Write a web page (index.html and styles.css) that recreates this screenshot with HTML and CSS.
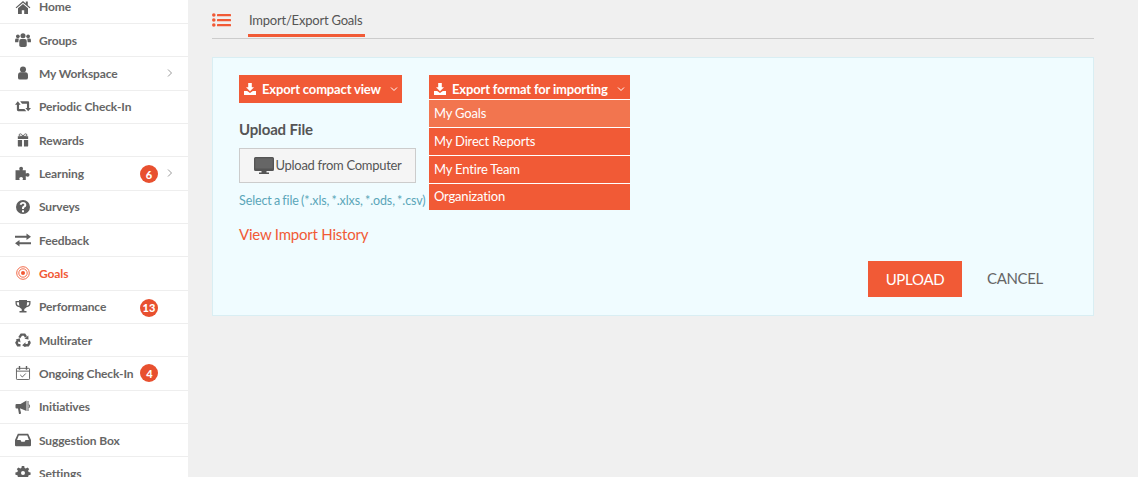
FILE: index.html
```html
<!DOCTYPE html>
<html lang="en">
<head>
<meta charset="utf-8">
<title>Import/Export Goals</title>
<link rel="stylesheet" href="styles.css">
</head>
<body>
<svg class="sprites" aria-hidden="true">
  <symbol id="download" viewBox="0 0 12 12"><path d="M4.2 0h3.6v4.2H10L6 8.200 2 4.200h2.200zM0 8h3.200L6 10l2.800-2H12v4H0z"/></symbol>
  <symbol id="chev" viewBox="0 0 8 8"><path class="line" d="M1 2.500 4 5.500 7 2.500"/></symbol>
</svg>
<div class="app">
  <nav class="sidebar">
    <ul class="nav">
      <li class="item"><svg class="ico" viewBox="0 0 16 14"><path d="M8 1 0.600 7.400l.8.900L8 2.800l6.600 5.500.8-.9L12.800 5.200V1.500h-2v2L8 1zM3 8.300V14h3.800v-3.800h2.400V14H13V8.300L8 4.100z"/></svg><span class="label">Home</span></li>
      <li class="item"><svg class="ico" viewBox="0 0 17 15"><circle cx="3" cy="3.500" r="2"/><circle cx="14" cy="3.500" r="2"/><circle cx="8.500" cy="3" r="2.700"/><path d="M0 10V7.500Q0 6 1.500 6H4L3.500 10zM17 10V7.500Q17 6 15.500 6H13l.5 4zM4.500 13.500V8.500Q4.500 6.500 6.500 6.500h4q2 0 2 2v5q0 1.500-2 1.500h-4q-2 0-2-1.500z"/></svg><span class="label">Groups</span></li>
      <li class="item"><svg class="ico" viewBox="0 0 17 14"><circle cx="8.500" cy="3.200" r="3.200"/><path d="M3.200 11V9.500Q3.200 6.500 6 6.300h5Q13.800 6.500 13.800 9.500V12Q13.800 14 11.800 14H5.200Q3.200 14 3.200 12z"/></svg><span class="label">My Workspace</span><svg class="chevron" viewBox="0 0 8 8"><path class="line" d="M2 .5 5.500 4 2 7.500"/></svg></li>
      <li class="item"><svg class="ico" viewBox="0 0 17 12"><path d="M3 0 6 3.500H4.300V8H10l2 2.500H3.500Q2 10.500 2 9V3.500H0zM5.500 0H14Q15 0 15 1.500V7h2l-3 3.500L11 7h1.700V2.500H7.500z"/></svg><span class="label">Periodic Check-In</span></li>
      <li class="item"><svg class="ico" viewBox="0 0 17 14"><path d="M3 3h11v3H3zM3 7h4.500v7H4Q3 14 3 13zM9.500 7H14v6q0 1-1 1H9.500zM7.500 3h2v3h-2z"/><path class="line" d="M8.500 3C7.500 1 6.500 .5 5.500.5 4 .5 4 3 5.500 3zM8.500 3C9.500 1 10.500 .5 11.500.5 13 .5 13 3 11.500 3z"/></svg><span class="label">Rewards</span></li>
      <li class="item"><svg class="ico" viewBox="0 0 16 15"><path d="M0 4.500h4.500Q4 3.500 4 2.500 4 .8 6 .8T8 2.500Q8 3.500 7.500 4.500H11V8q1-.6 2-.6 2 0 2 2t-2 2q-1 0-2-.6V15H7.500q.5-1 .5-1.500 0-1.700-2-1.700T4 13.500Q4 14 4.500 15H0z"/></svg><span class="label">Learning</span><span class="badge badge-far">6</span><svg class="chevron" viewBox="0 0 8 8"><path class="line" d="M2 .5 5.500 4 2 7.500"/></svg></li>
      <li class="item"><svg class="ico" viewBox="0 0 14 14"><path fill-rule="evenodd" d="M7 0a7 7 0 1 1 0 14A7 7 0 0 1 7 0zM6 10.300v1.900h2v-1.900zM7 2C5.200 2 4 3 3.700 4.500l1.800.5C5.700 4.300 6.200 3.800 7 3.800c.8 0 1.300.4 1.300 1 0 .6-.5.900-1.100 1.300C6.500 6.600 6 7.100 6 8.200v.8h2v-.5c0-.5.3-.8.900-1.200C9.700 6.800 10.300 6.100 10.300 4.900 10.300 3.200 8.900 2 7 2z"/></svg><span class="label">Surveys</span></li>
      <li class="item"><svg class="ico" viewBox="0 0 16 13"><path d="M11.500 0 16 3.200 11.500 6.400V4.200H0V2.200h11.500zM4.500 6.600V8.800H16v2H4.500V13L0 9.800z"/></svg><span class="label">Feedback</span></li>
      <li class="item active"><svg class="ico" viewBox="0 0 14 14"><circle class="ring" cx="7" cy="7" r="6.300"/><circle class="ring" cx="7" cy="7" r="4.200"/><circle cx="7" cy="7" r="2"/></svg><span class="label">Goals</span></li>
      <li class="item"><svg class="ico" viewBox="0 0 15 14"><path d="M3.500 0h8v1h3.500v2.500Q15 6.500 11 7.300 10 8.500 8.800 8.900V11H11v1.500H4V11h2.200V8.900Q5 8.500 4 7.300 0 6.500 0 3.500V1h3.500zM1.300 2.300v1.200q0 1.800 2.500 2.500-.3-1.500-.3-3.700zM13.700 2.300h-2.200q0 2.200-.3 3.700 2.500-.7 2.500-2.500z"/></svg><span class="label">Performance</span><span class="badge badge-far">13</span></li>
      <li class="item"><svg class="ico" viewBox="0 0 15 14"><path class="thick" d="M3.800 4.600 5.800 1.600H9L10.500 4"/><path d="M12.800 2.400 13 6.500 9 5.800z"/><path class="thick" d="M13.300 8 14 9.800 12.600 12.200H9.500"/><path d="M10 9.300V14.500L6.700 12.200z"/><path class="thick" d="M5 12.200H2.400L1 9.800 2.500 7.200"/><path d="M.2 6.500 4.300 5.300 5 9.500z"/></svg><span class="label">Multirater</span></li>
      <li class="item"><svg class="ico" viewBox="0 0 15 15"><rect class="line" x=".5" y="2.500" width="14" height="12" rx=".8"/><path class="line" d="M.5 5.500h14"/><path d="M3 0h1.500v4H3zM10.500 0H12v4h-1.500z"/><path class="line" d="M4.500 9.500 6.800 11.800 10.500 8"/></svg><span class="label">Ongoing Check-In</span><span class="badge badge-near">4</span></li>
      <li class="item"><svg class="ico" viewBox="0 0 15 14"><path d="M0 5Q0 4 1 4h4l6-3.500V11L5 8.500H4.500L5.500 13l-.5 1H3.500L2.500 8.500H1Q0 8.500 0 7.500z"/><path class="line" d="M12.500 1v10M13.500 4.500q1.200 1.700 0 3.400"/></svg><span class="label">Initiatives</span></li>
      <li class="item"><svg class="ico" viewBox="0 0 14 11"><path fill-rule="evenodd" d="M2.500 0h9L14 5.500V10q0 1-1 1H1q-1 0-1-1V5.500zM3.300 1.500 1.800 5.500h3l.8 1.500h2.800l.8-1.500h3l-1.500-4z"/></svg><span class="label">Suggestion Box</span></li>
      <li class="item"><svg class="ico" viewBox="0 0 14 14"><path fill-rule="evenodd" d="M5.800 0h2.400l.4 2 1.200.5 1.700-1.100 1.700 1.700-1.100 1.700.5 1.200 2 .4v2.400l-2 .4-.5 1.200 1.100 1.700-1.700 1.700-1.700-1.100-1.200.5-.4 2H5.800l-.4-2-1.200-.5-1.700 1.100L.8 12.100l1.100-1.700-.5-1.200-2-.4V6.400l2-.4.500-1.200L.8 3.100 2.500 1.400l1.700 1.100 1.200-.5zM7 5a2 2 0 1 0 0 4 2 2 0 0 0 0-4z"/></svg><span class="label">Settings</span></li>
    </ul>
  </nav>
  <main class="main">
    <header class="tabs">
      <svg class="list-icon" viewBox="0 0 19 14"><circle cx="1.800" cy="2" r="1.800"/><circle cx="1.800" cy="7" r="1.800"/><circle cx="1.800" cy="12" r="1.800"/><rect x="5" y=".9" width="14" height="2.400" rx=".6"/><rect x="5" y="5.900" width="14" height="2.400" rx=".6"/><rect x="5" y="10.900" width="14" height="2.400" rx=".6"/></svg>
      <div class="tab">Import/Export Goals</div>
    </header>
    <section class="panel">
      <div class="columns">
        <div class="col-upload">
          <button class="btn-export"><svg class="dl"><use href="#download"/></svg><span>Export compact view</span><svg class="caret"><use href="#chev"/></svg></button>
          <h2 class="upload-title">Upload File</h2>
          <button class="btn-computer"><svg class="monitor" viewBox="0 0 20 17"><path d="M1.500 0h17Q20 0 20 1.500v11q0 1.500-1.500 1.500h-6v1.500H15V17H5v-1.500h2.500V14h-6Q0 14 0 12.500v-11Q0 0 1.500 0z"/><rect class="screen" x="1.300" y="1.300" width="17.400" height="10.200"/></svg><span>Upload from Computer</span></button>
          <p class="hint">Select a file (*.xls, *.xlxs, *.ods, *.csv)</p>
          <a class="history">View Import History</a>
        </div>
        <div class="col-export">
          <button class="btn-export btn-open"><svg class="dl"><use href="#download"/></svg><span>Export format for importing</span><svg class="caret"><use href="#chev"/></svg></button>
          <ul class="menu">
            <li class="menu-item hover">My Goals</li>
            <li class="menu-item">My Direct Reports</li>
            <li class="menu-item">My Entire Team</li>
            <li class="menu-item last">Organization</li>
          </ul>
        </div>
      </div>
      <div class="actions">
        <button class="btn-upload">UPLOAD</button>
        <button class="btn-cancel">CANCEL</button>
      </div>
    </section>
  </main>
</div>
</body>
</html>
```
FILE: styles.css
```css
* { box-sizing: border-box; }
html, body { margin: 0; height: 477px; overflow: hidden; }
body { background: #f0f0f0; font-family: Lato, "Liberation Sans", sans-serif; color: #555; }
.sprites { display: none; }
ul { list-style: none; margin: 0; padding: 0; }
button { font-family: inherit; cursor: pointer; }
.app { display: flex; height: 477px; }
.line { fill: none; stroke: currentColor; stroke-width: 1; }
.thick { fill: none; stroke: currentColor; stroke-width: 2.4; }
.ring { fill: none; stroke: currentColor; stroke-width: .9; }

.sidebar { width: 188px; flex: none; background: #fff; height: 477px; overflow: hidden; }
.nav { margin-top: -9.4px; }
.item { height: 33.33px; display: flex; align-items: center; border-bottom: 1px solid #eee; padding-left: 15px; font-size: 12px; font-weight: 700; letter-spacing: -.12px; color: #666; position: relative; }
.item.active { color: #f15a36; }
.ico { width: 16px; height: 14px; fill: currentColor; flex: none; color: #5f5f5f; }
.active .ico { color: #f15a36; }
.label { margin-left: 8px; white-space: nowrap; }
.chevron { position: absolute; left: 166px; top: 12px; width: 8px; height: 8px; color: #999; }
.badge { width: 18px; height: 18px; border-radius: 50%; background: #e8502f; color: #fff; font-size: 11px; font-weight: 900; letter-spacing: 0; display: flex; align-items: center; justify-content: center; }
.badge-far { position: absolute; left: 140px; top: 8px; }
.badge-near { margin-left: 7px; }

.main { width: 882px; margin-left: 24px; flex: none; }
.tabs { height: 39px; border-bottom: 1px solid #ccc; display: flex; align-items: flex-start; }
.list-icon { width: 19px; height: 14px; fill: #f15a36; margin-top: 13px; flex: none; }
.tab { margin-left: 17px; width: 117px; height: 37px; padding: 12px 0 0 1px; border-bottom: 3px solid #f15a36; font-size: 13px; letter-spacing: -.22px; color: #555; white-space: nowrap; }

.panel { margin-top: 18px; height: 259px; border: 1px solid #d9eef3; background: #f0fcff; padding: 17px 26px 18px; display: flex; flex-direction: column; justify-content: space-between; }
.columns { display: flex; gap: 27px; }
.col-upload { width: 163px; flex: none; }
.col-export { width: 201px; flex: none; }

.btn-export { height: 28px; width: 163px; border: 0; background: #f15a36; color: #fff; font-size: 13px; font-weight: 700; letter-spacing: -.16px; display: flex; align-items: center; padding: 0 0 0 5px; white-space: nowrap; }
.btn-open { height: 24px; width: 201px; padding-top: 4px; overflow: hidden; }
.dl { width: 12px; height: 12px; fill: #fff; flex: none; margin-right: 6px; }
.caret { width: 8px; height: 8px; color: #fff; flex: none; margin-left: 9px; }

.upload-title { margin: 17px 0 0; font-size: 15px; line-height: 18px; font-weight: 700; letter-spacing: -.15px; color: #555; white-space: nowrap; }
.btn-computer { margin-top: 10px; width: 177px; height: 35px; border: 1px solid #ccc; background: #f5f5f5; color: #555; font-size: 13px; letter-spacing: -.3px; line-height: 15px; display: flex; align-items: center; justify-content: center; padding: 0; white-space: nowrap; }
.monitor { width: 20px; height: 17px; fill: #555; margin: 0 2px 0 0; flex: none; }
.monitor .screen { fill: #666; }
.hint { margin: 10px 0 0; font-size: 12.5px; letter-spacing: -.1px; word-spacing: -.9px; line-height: 16px; color: #5ba6b9; white-space: nowrap; }
.history { display: block; margin-top: 15px; font-size: 15px; letter-spacing: -.22px; line-height: 20px; color: #f15a36; white-space: nowrap; }

.menu-item { height: 28px; border-top: 1px solid #fff; background: #f15a36; color: #fff; font-size: 13px; letter-spacing: -.18px; padding-left: 5px; line-height: 26px; }
.menu-item.hover { background: #f2754f; }
.menu-item.last { height: 27px; line-height: 25px; }

.actions { display: flex; justify-content: flex-end; align-items: center; padding-right: 24px; }
.btn-upload { width: 94px; height: 36px; border: 0; background: #f15a36; color: #fff; font-size: 15px; letter-spacing: -.3px; padding: 0 0 1px; }
.btn-cancel { margin-left: 25px; width: 56px; padding: 0 0 3px; border: 0; background: none; color: #666; font-size: 15px; letter-spacing: -.35px; white-space: nowrap; }
```
